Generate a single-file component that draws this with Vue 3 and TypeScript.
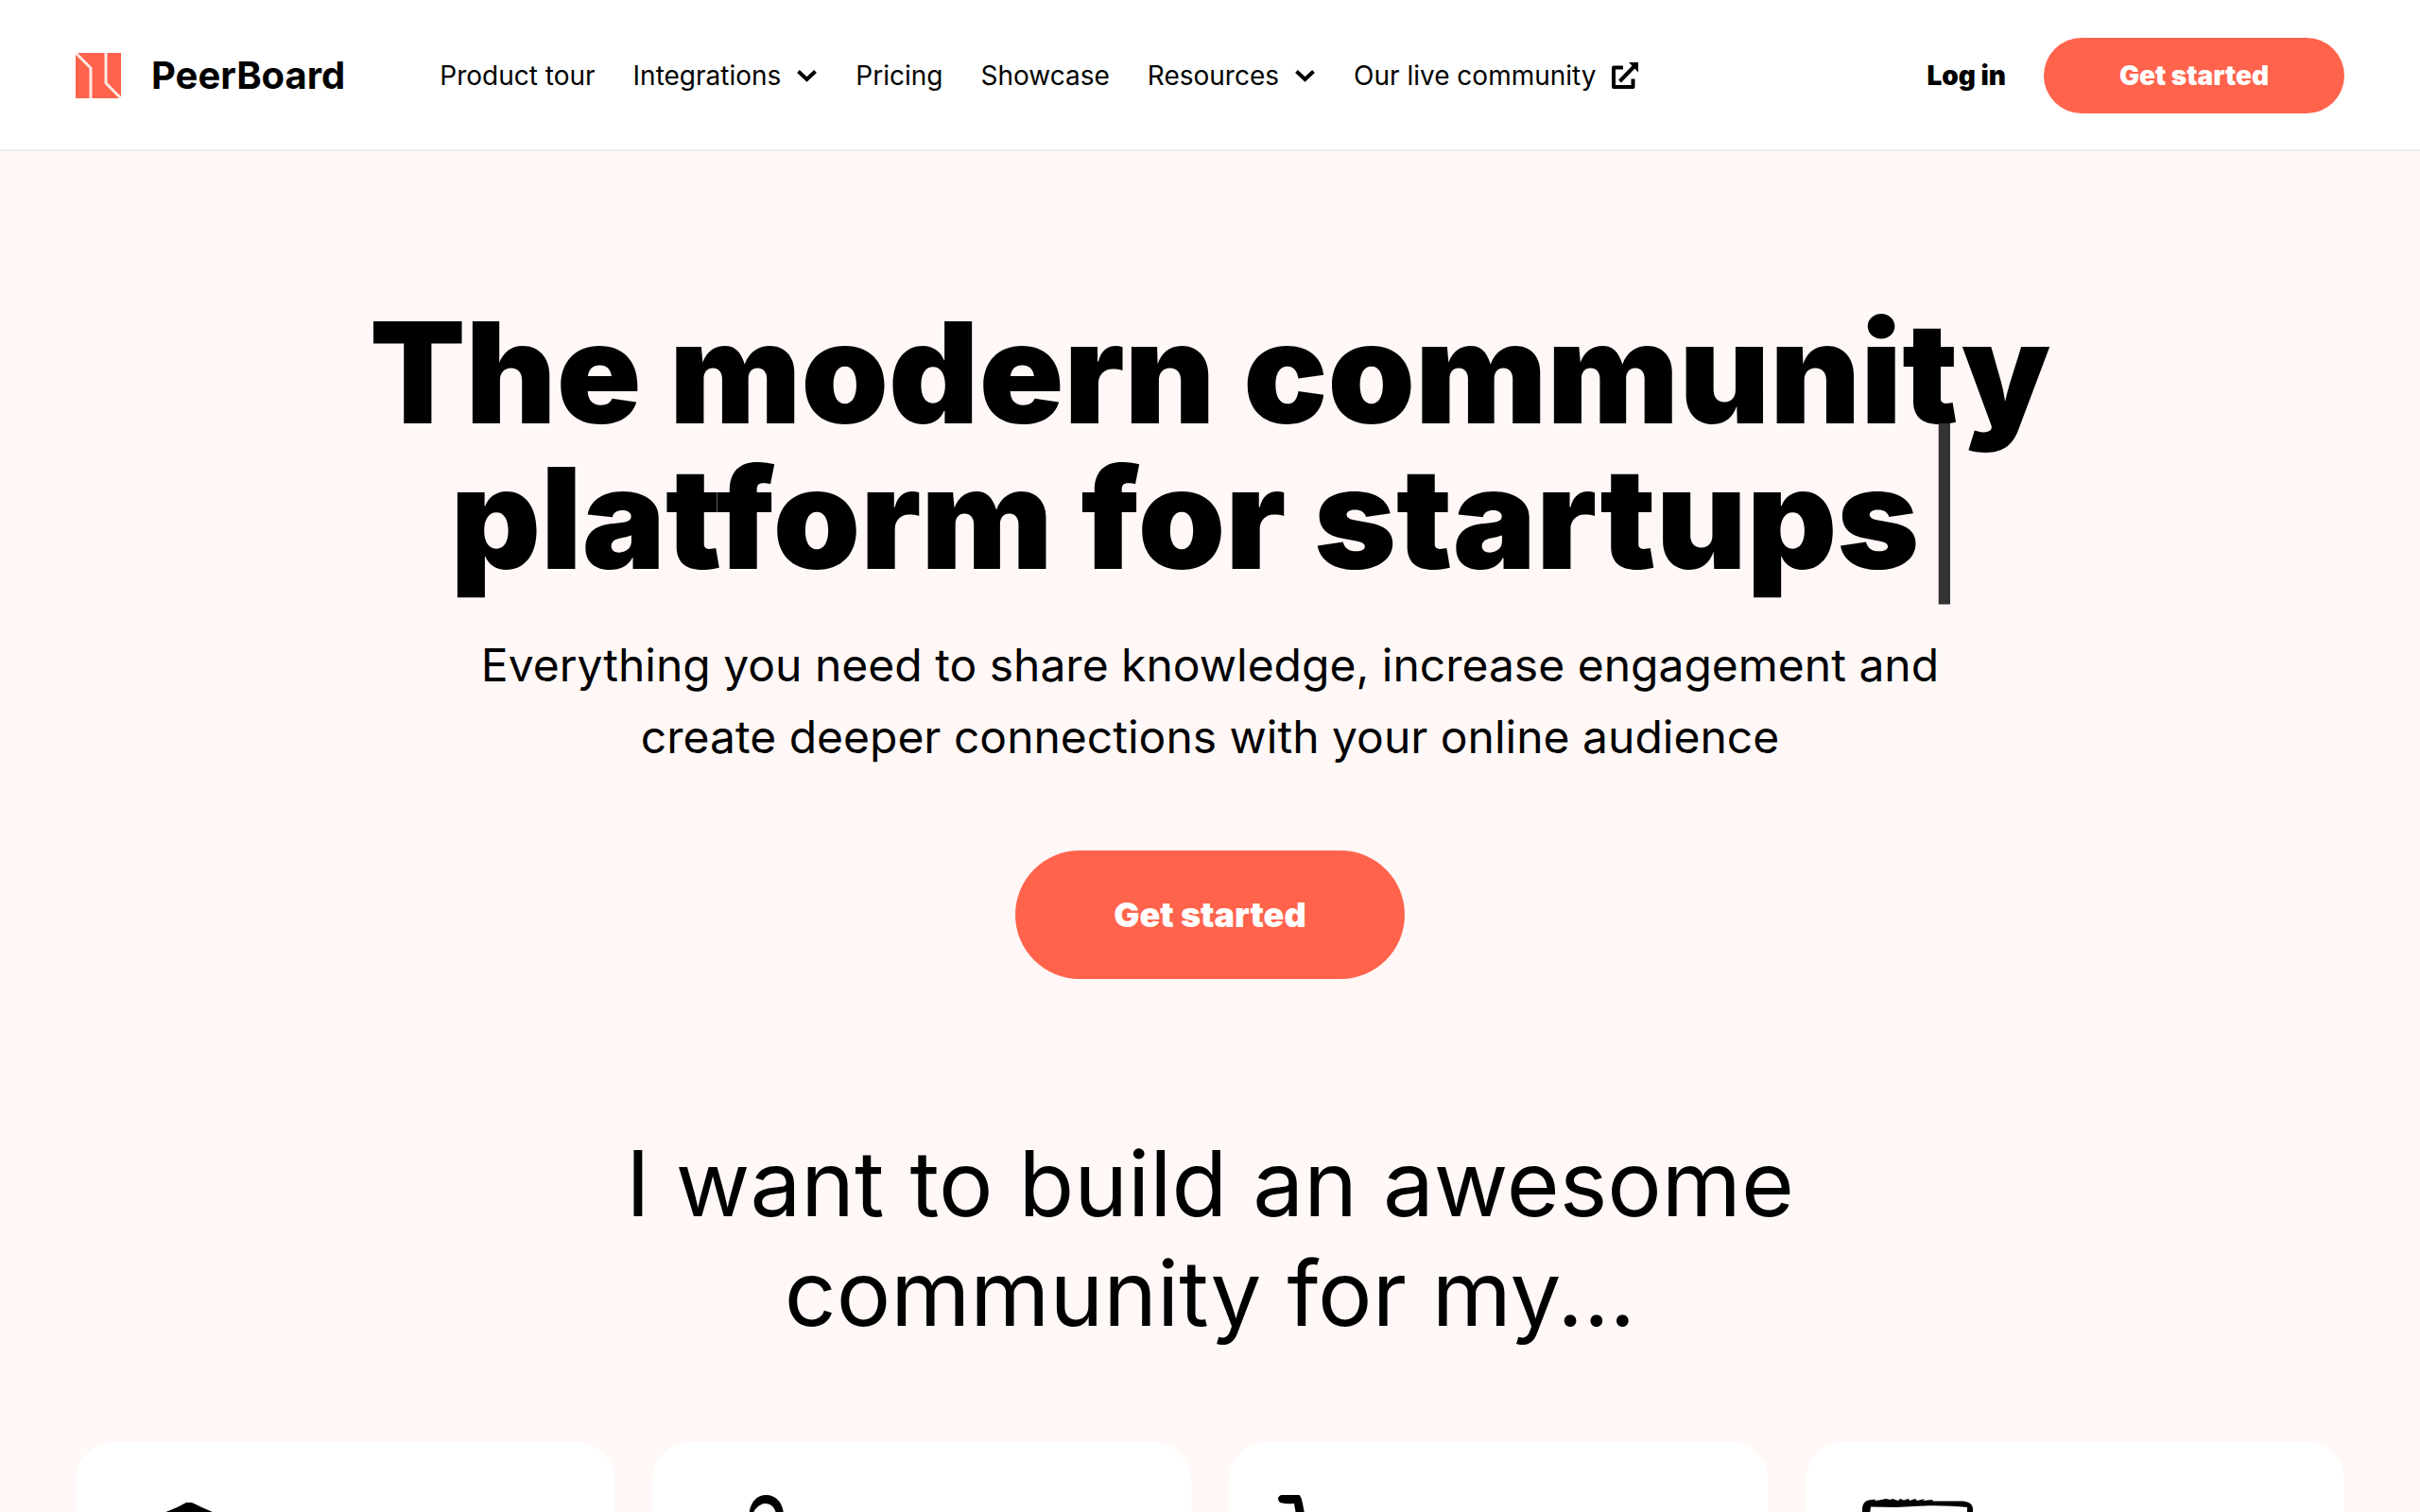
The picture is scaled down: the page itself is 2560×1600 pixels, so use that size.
<script setup lang="ts">
interface NavItem {
  label: string
  icon?: 'chevron' | 'external'
}

const navItems: NavItem[] = [
  { label: 'Product tour' },
  { label: 'Integrations', icon: 'chevron' },
  { label: 'Pricing' },
  { label: 'Showcase' },
  { label: 'Resources', icon: 'chevron' },
  { label: 'Our live community', icon: 'external' },
]
</script>

<template>
  <div class="page">
    <header class="header">
      <a class="brand" href="#">
        <svg class="brand-mark" viewBox="0 0 48 48" aria-hidden="true">
          <rect width="48" height="48" fill="#ff634c" />
          <path d="M0 0L16 16V48M32 0V32L48 48" fill="none" stroke="#ffe9e5" stroke-width="3" />
        </svg>
        <span class="brand-name">PeerBoard</span>
      </a>
      <nav class="nav">
        <a v-for="item in navItems" :key="item.label" class="nav-link" href="#">
          {{ item.label }}
          <svg v-if="item.icon === 'chevron'" class="chevron" viewBox="0 0 23 14" aria-hidden="true">
            <path d="M2.500 2.500L11.500 11L20.500 2.500" fill="none" stroke="currentColor" stroke-width="4" />
          </svg>
          <svg v-else-if="item.icon === 'external'" class="external" viewBox="0 0 28 28" aria-hidden="true">
            <path d="M12 5.500H2V26H22.500V17.500" fill="none" stroke="currentColor" stroke-width="4" stroke-linejoin="round" />
            <path d="M8.500 20L24 4" fill="none" stroke="currentColor" stroke-width="4" />
            <path d="M18 0H28V10.500Z" fill="currentColor" />
          </svg>
        </a>
      </nav>
      <div class="actions">
        <a class="login" href="#">Log in</a>
        <button class="button" type="button">Get started</button>
      </div>
    </header>

    <main class="main">
      <section class="hero">
        <h1 class="title">The modern community<br />platform for <span>startups</span><span class="cursor">|</span></h1>
        <p class="subtitle">
          Everything you need to share knowledge, increase engagement and create deeper connections with your online audience
        </p>
        <button class="button button-large" type="button">Get started</button>
      </section>

      <section class="audience">
        <h2 class="question">I want to build an awesome community for my...</h2>
        <div class="cards">
          <a class="card" href="#" aria-label="Education">
            <svg class="card-icon" viewBox="0 0 160 160" aria-hidden="true">
              <path d="M77 24H83Q95 30 106 34.500L154 56Q157 59 153 62L83 94H77L7 62Q3 59 6 56L54 34.500Q67 30 77 24Z" />
            </svg>
          </a>
          <a class="card" href="#" aria-label="Creators">
            <svg class="card-icon" viewBox="0 0 160 160" aria-hidden="true">
              <path fill-rule="evenodd" d="M62.500 38C62.500 25 70 16 80.500 16C92 16 99 26 99 38C99 52 92 60 81 60C70 60 62.500 50 62.500 38ZM67 36C66 45 71 52 80 52C88 52 92 44 91 36C90 29 85 25 79 25C75 25 67 31 67 36Z" />
            </svg>
          </a>
          <a class="card" href="#" aria-label="Store">
            <svg class="card-icon" viewBox="0 0 160 160" aria-hidden="true">
              <path d="M16 16H34.500Q37 19 38 25L50 90H40L29 25C25 25.500 19 25.500 14 24Q12 23 12 19.500Q13 16 16 16Z" />
            </svg>
          </a>
          <a class="card" href="#" aria-label="Software">
            <svg class="card-icon" viewBox="0 0 160 160" aria-hidden="true">
              <path fill-rule="evenodd" d="M20 38V31C20 25 24 21.500 27 21.500L34 20.500L33 22L38 21.500L45 20L50 21L52 20L58 22L60 20L64 21.500L69 20L70 22L76 20L78 22L86 20L84 22L94 21L95 22.500H126C132 23 137 25 137 31V140H20ZM28 36V130H131V29C118 28 102 27 86 27.500L56 29L29 28.500Z" />
            </svg>
          </a>
        </div>
      </section>
    </main>
  </div>
</template>

<style>
body {
  margin: 0;
}
</style>

<style scoped>
.page {
  display: flex;
  flex-direction: column;
  height: 100vh;
  overflow: hidden;
  background: #fff8f6;
  color: #000;
  font-family: Inter, "Liberation Sans", sans-serif;
}

.header {
  display: flex;
  flex: none;
  align-items: center;
  padding: 40px 80px 38px;
  border-bottom: 2px solid #ededef;
  background: #fff;
}

.brand {
  display: flex;
  align-items: center;
  gap: 32px;
  margin-right: 100px;
  color: inherit;
  text-decoration: none;
}

.brand-mark {
  width: 48px;
  height: 48px;
}

.brand-name {
  font-size: 40px;
  font-weight: 700;
  line-height: 48px;
}

.nav {
  display: flex;
  gap: 40px;
}

.nav-link {
  display: flex;
  align-items: center;
  gap: 16px;
  color: inherit;
  font-size: 28px;
  line-height: 40px;
  text-decoration: none;
  white-space: nowrap;
}

.chevron {
  width: 23px;
  height: 14px;
}

.external {
  width: 28px;
  height: 28px;
}

.actions {
  display: flex;
  align-items: center;
  gap: 40px;
  margin-left: auto;
}

.login {
  color: inherit;
  font-size: 28px;
  font-weight: 900;
  text-decoration: none;
}

.button {
  padding: 20px 80px;
  border: 0;
  border-radius: 40px;
  background: #ff634c;
  color: #fff;
  font-family: inherit;
  font-size: 28px;
  font-weight: 900;
  line-height: 40px;
  white-space: nowrap;
}

.button-large {
  padding: 44px 104px;
  border-radius: 68px;
  font-size: 36px;
  line-height: 48px;
}

.main {
  padding: 158px 80px 0;
}

.hero {
  display: flex;
  flex-direction: column;
  align-items: center;
  text-align: center;
}

.title {
  margin: 0;
  font-size: 148px;
  font-weight: 900;
  line-height: 154px;
}

.cursor {
  color: #333;
  font-size: 160px;
  font-weight: 400;
  line-height: 0;
}

.subtitle {
  max-width: 1600px;
  margin: 40px 0 82px;
  font-size: 48px;
  line-height: 76px;
}

.audience {
  margin-top: 158px;
}

.question {
  max-width: 1400px;
  margin: 0 auto;
  font-size: 96px;
  font-weight: 400;
  line-height: 116px;
  text-align: center;
}

.cards {
  display: grid;
  grid-template-columns: repeat(4, 1fr);
  gap: 40px;
  margin-top: 100px;
}

.card {
  padding: 40px;
  border-radius: 40px;
  background: #fff;
  color: inherit;
}

.card-icon {
  display: block;
  width: 160px;
  height: 160px;
}
</style>
